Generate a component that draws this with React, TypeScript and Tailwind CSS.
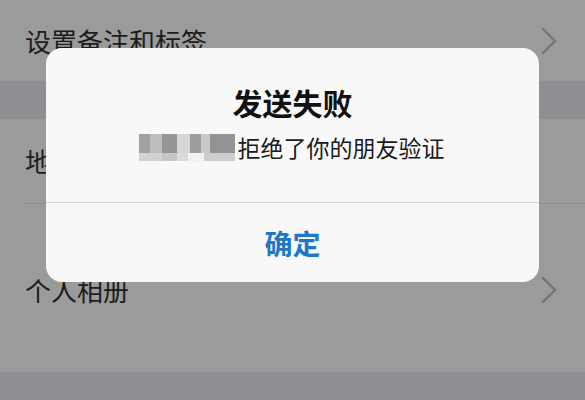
import React from 'react'

const font = { fontFamily: '"Noto Sans CJK SC", "Noto Sans", sans-serif' }

function Chevron() {
  return (
    <svg width="16" height="26" viewBox="0 0 16 26" className="shrink-0">
      <polyline
        points="2,1 14,13 2,25"
        fill="none"
        stroke="#747474"
        strokeWidth="2.4"
        strokeLinecap="round"
        strokeLinejoin="round"
      />
    </svg>
  )
}

// pixelated name (mosaic) in front of the message
const mosaicTop = [
  { w: 11, c: 'bg-[#a2a2a2]' },
  { w: 12, c: 'bg-[#bdbdbd]' },
  { w: 15, c: 'bg-[#969696]' },
  { w: 13, c: 'bg-[#d6d6d6]' },
  { w: 11, c: 'bg-[#9c9c9c]' },
  { w: 9, c: 'bg-[#cacaca]' },
  { w: 25, c: 'bg-[#939393]' },
]
const mosaicBottom = [
  { w: 23, c: 'bg-[#d2d2d2]' },
  { w: 15, c: 'bg-[#c6c6c6]' },
  { w: 11, c: 'bg-[#dadada]' },
  { w: 16, c: 'bg-[#f2f2f2]' },
  { w: 31, c: 'bg-[#cdcdcd]' },
]

function Mosaic() {
  return (
    <div className="mr-[3px] flex h-[27px] w-[96px] flex-col overflow-hidden blur-[0.6px]">
      <div className="flex h-[19px]">
        {mosaicTop.map((m, i) => (
          <div key={i} className={m.c} style={{ width: m.w }} />
        ))}
      </div>
      <div className="flex h-[8px]">
        {mosaicBottom.map((m, i) => (
          <div key={i} className={m.c} style={{ width: m.w }} />
        ))}
      </div>
    </div>
  )
}

export default function App() {
  return (
    <div className="relative h-[400px] w-[585px] overflow-hidden bg-[#8f8f93]" style={font}>
      {/* dimmed settings list */}
      <div className="flex h-[81px] items-center justify-between bg-[#9b9b9b] pl-[25px] pr-[28px]">
        <span className="text-[26px] leading-none text-[#1c1c1c]">设置备注和标签</span>
        <Chevron />
      </div>
      <div className="h-[38px]" />
      <div className="bg-[#9b9b9b] pl-[25px]">
        <div className="flex h-[85px] items-center border-b border-[#8a8a8a]">
          <span className="text-[26px] leading-none text-[#1c1c1c]">地址</span>
        </div>
      </div>
      <div className="flex h-[168px] items-start justify-between bg-[#9b9b9b] pl-[25px] pr-[28px] pt-[73px]">
        <span className="text-[26px] leading-none text-[#1c1c1c]">个人相册</span>
        <Chevron />
      </div>

      {/* alert */}
      <div className="absolute left-[46px] top-[48px] flex h-[234px] w-[493px] flex-col rounded-[16px] bg-[#f8f8f8]">
        <div className="flex h-[154px] flex-col items-center pt-[36px]">
          <h2 className="text-[30px] font-semibold leading-[36px] text-[#111]">发送失败</h2>
          <div className="mt-[12px] flex items-center pr-[2px]">
            <Mosaic />
            <span className="text-[23px] leading-[30px] text-[#1a1a1a]">拒绝了你的朋友验证</span>
          </div>
        </div>
        <div className="h-px bg-[#d6d6d6]" />
        <div className="flex flex-1 items-center justify-center">
          <span className="text-[28px] font-semibold leading-none text-[#1d78c9]">确定</span>
        </div>
      </div>
    </div>
  )
}
